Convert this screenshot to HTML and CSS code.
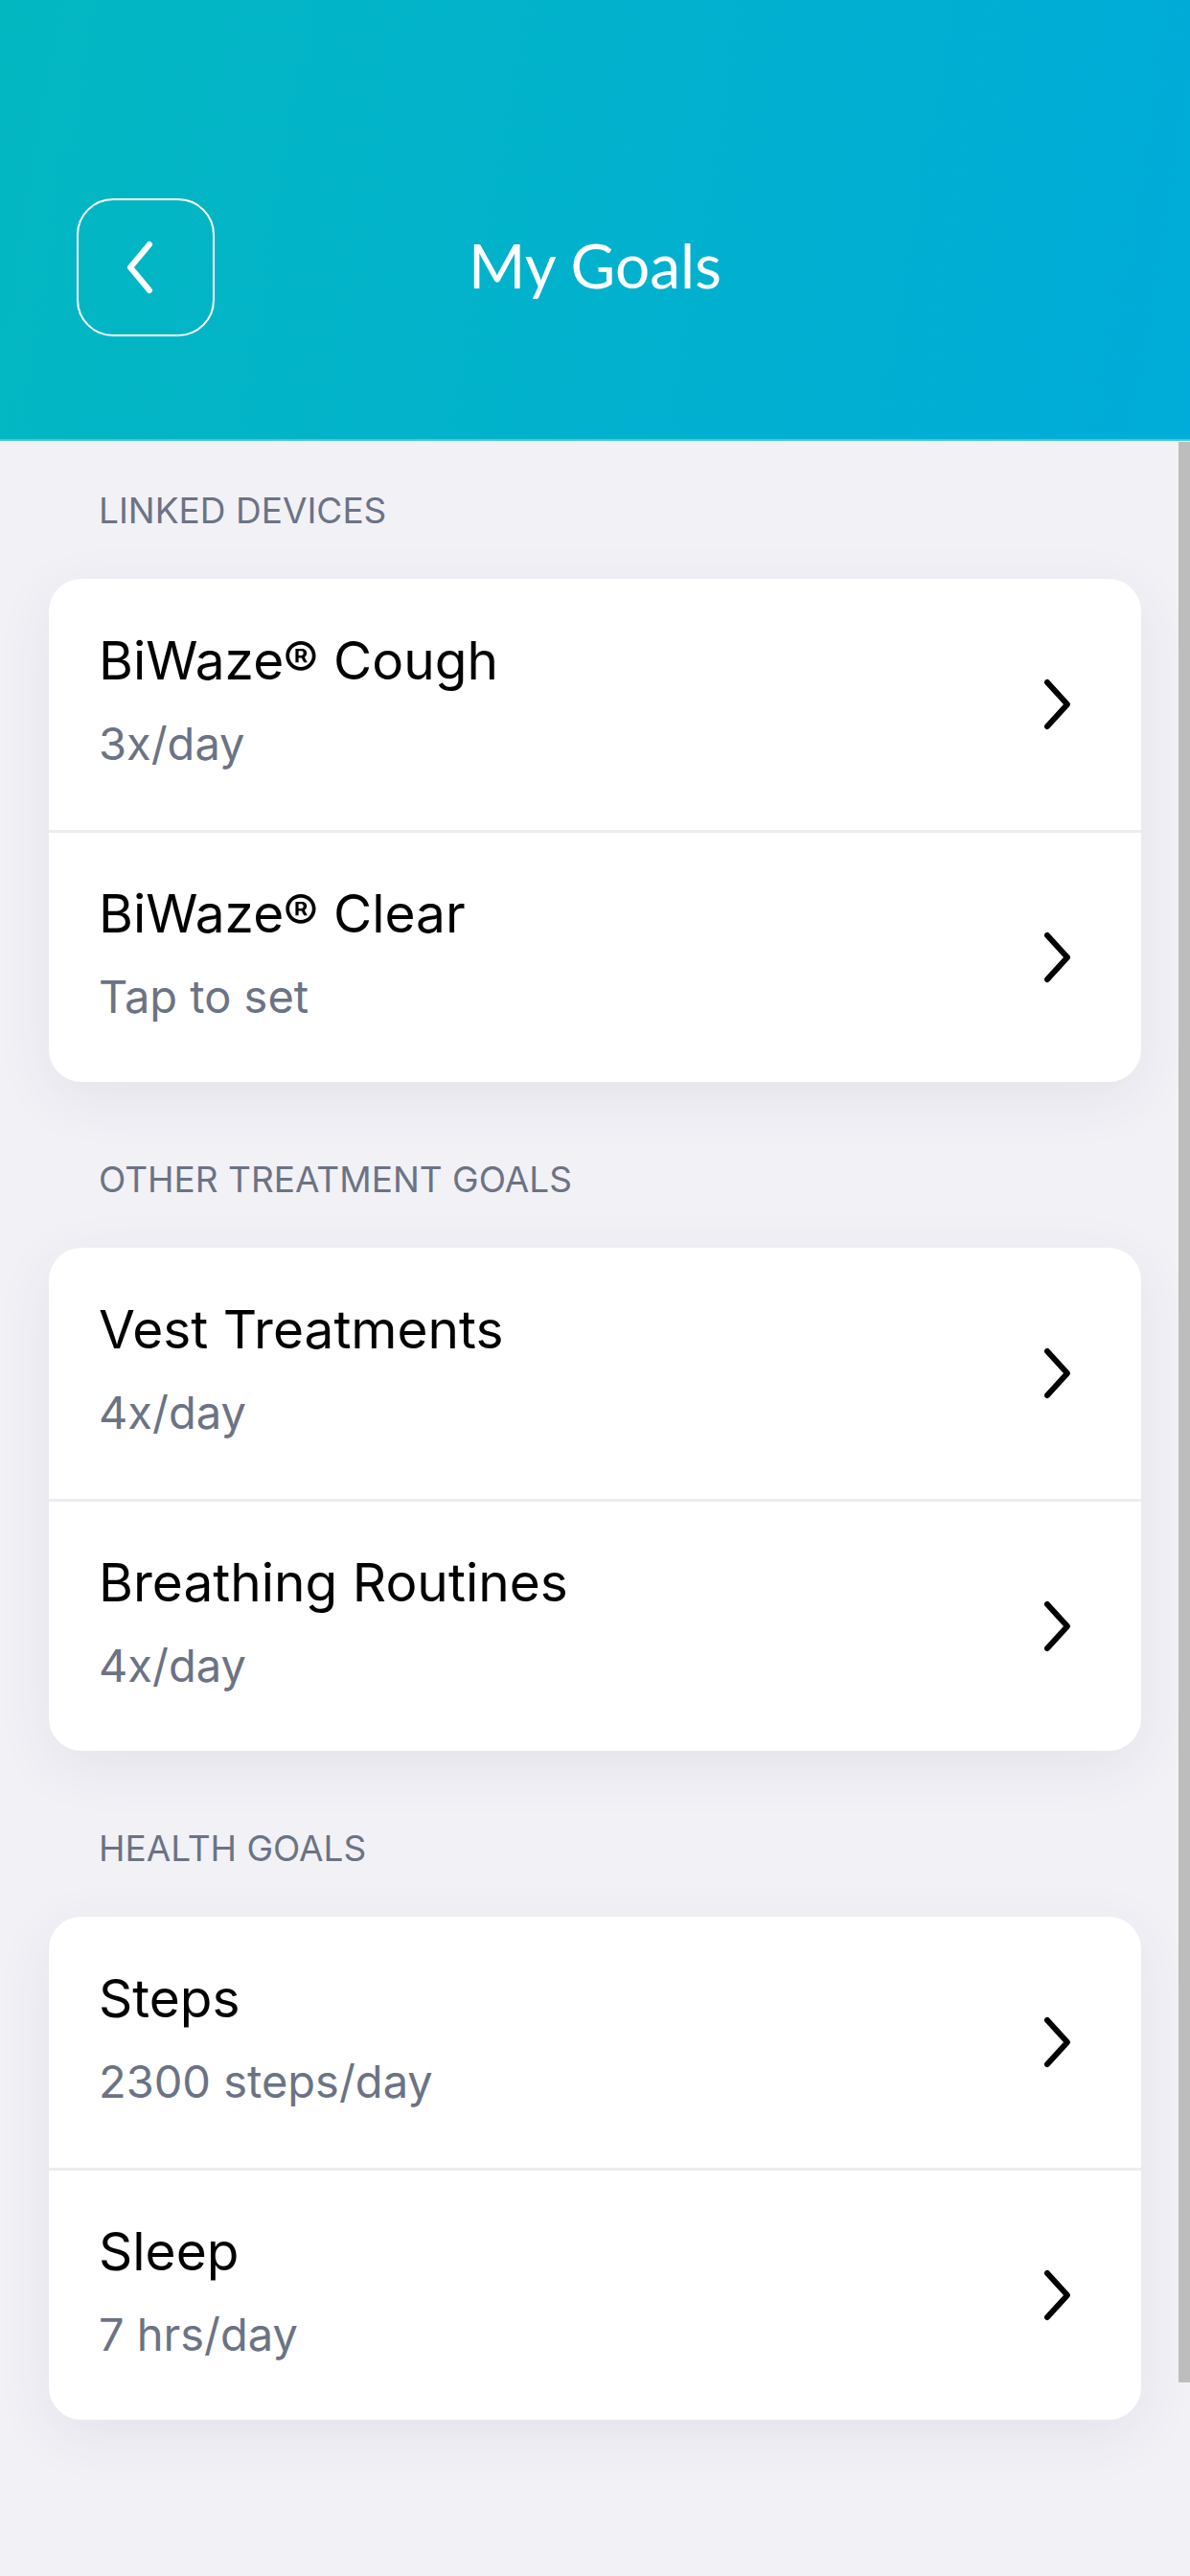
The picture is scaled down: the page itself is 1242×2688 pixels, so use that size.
FILE: index.html
```html
<!DOCTYPE html>
<html lang="en">
<head>
  <meta charset="UTF-8">
  <meta name="viewport" content="width=device-width, initial-scale=1.0">
  <title>My Goals</title>
  <link rel="stylesheet" href="styles.css">
</head>
<body>
  <header class="topbar">
    <button class="back-btn" type="button" aria-label="Back">
      <svg width="40" height="60" viewBox="0 0 40 60">
        <polyline points="27,6 7,30 27,54" fill="none" stroke="#fff" stroke-width="6" stroke-linecap="round" stroke-linejoin="round"/>
      </svg>
    </button>
    <h1 class="title">My Goals</h1>
    <span class="spacer"></span>
  </header>

  <main class="content">
    <!-- Linked devices -->
    <h2 class="section-label">LINKED DEVICES</h2>
    <section class="card">
      <a class="row" href="#">
        <div class="row-text">
          <span class="row-title">BiWaze® Cough</span>
          <span class="row-sub">3x/day</span>
        </div>
        <svg class="chev" width="36" height="56" viewBox="0 0 36 56"><polyline points="8,5 29,28 8,51" fill="none" stroke="#000" stroke-width="6" stroke-linecap="round" stroke-linejoin="round"/></svg>
      </a>
      <a class="row" href="#">
        <div class="row-text">
          <span class="row-title">BiWaze® Clear</span>
          <span class="row-sub">Tap to set</span>
        </div>
        <svg class="chev" width="36" height="56" viewBox="0 0 36 56"><polyline points="8,5 29,28 8,51" fill="none" stroke="#000" stroke-width="6" stroke-linecap="round" stroke-linejoin="round"/></svg>
      </a>
    </section>

    <!-- Other treatment goals -->
    <h2 class="section-label">OTHER TREATMENT GOALS</h2>
    <section class="card">
      <a class="row" href="#">
        <div class="row-text">
          <span class="row-title">Vest Treatments</span>
          <span class="row-sub">4x/day</span>
        </div>
        <svg class="chev" width="36" height="56" viewBox="0 0 36 56"><polyline points="8,5 29,28 8,51" fill="none" stroke="#000" stroke-width="6" stroke-linecap="round" stroke-linejoin="round"/></svg>
      </a>
      <a class="row" href="#">
        <div class="row-text">
          <span class="row-title">Breathing Routines</span>
          <span class="row-sub">4x/day</span>
        </div>
        <svg class="chev" width="36" height="56" viewBox="0 0 36 56"><polyline points="8,5 29,28 8,51" fill="none" stroke="#000" stroke-width="6" stroke-linecap="round" stroke-linejoin="round"/></svg>
      </a>
    </section>

    <!-- Health goals -->
    <h2 class="section-label">HEALTH GOALS</h2>
    <section class="card">
      <a class="row" href="#">
        <div class="row-text">
          <span class="row-title">Steps</span>
          <span class="row-sub">2300 steps/day</span>
        </div>
        <svg class="chev" width="36" height="56" viewBox="0 0 36 56"><polyline points="8,5 29,28 8,51" fill="none" stroke="#000" stroke-width="6" stroke-linecap="round" stroke-linejoin="round"/></svg>
      </a>
      <a class="row" href="#">
        <div class="row-text">
          <span class="row-title">Sleep</span>
          <span class="row-sub">7 hrs/day</span>
        </div>
        <svg class="chev" width="36" height="56" viewBox="0 0 36 56"><polyline points="8,5 29,28 8,51" fill="none" stroke="#000" stroke-width="6" stroke-linecap="round" stroke-linejoin="round"/></svg>
      </a>
    </section>
  </main>

  <div class="scroll-thumb"></div>
</body>
</html>
```

FILE: styles.css
```css
body {
  margin: 0;
  font-family: Inter, "Open Sans", sans-serif;
  background: #f2f1f6;
  color: #000;
  position: relative;
  min-height: 2688px;
}

.topbar {
  box-sizing: border-box;
  height: 460px;
  padding: 207px 80px 0;
  background: linear-gradient(100deg, #03b7c1 0%, #00acd9 100%);
  border-bottom: 2px solid #3cc6df;
  display: grid;
  grid-template-columns: 144px 1fr 144px;
  align-items: start;
}

.back-btn {
  box-sizing: border-box;
  width: 144px;
  height: 144px;
  border: 2px solid #fff;
  border-radius: 38px;
  background: transparent;
  display: flex;
  align-items: center;
  justify-content: center;
  padding: 0 6px 0 0;
  cursor: pointer;
}

.title {
  margin: 0;
  height: 144px;
  line-height: 140px;
  text-align: center;
  color: #fff;
  font-family: Lato, Inter, sans-serif;
  font-size: 64px;
  font-weight: 400;
}

.content {
  padding: 48px 51px 0;
}

.section-label {
  margin: 0 0 49px 52px;
  padding-top: 3px;
  font-size: 37px;
  line-height: 44px;
  font-weight: 400;
  color: #6b7385;
}

.card {
  background: #fff;
  border-radius: 34px;
  margin-bottom: 77px;
  box-shadow: 0 16px 60px rgba(70, 70, 100, 0.08);
  overflow: hidden;
}

.row {
  box-sizing: border-box;
  height: 262px;
  padding: 0 70px 0 52px;
  display: flex;
  align-items: center;
  justify-content: space-between;
  text-decoration: none;
  color: inherit;
}

.row + .row {
  height: 263px;
  border-top: 3px solid #ececf1;
}

.row-text {
  display: flex;
  flex-direction: column;
  gap: 26px;
  padding-bottom: 10px;
}

.row-title {
  font-size: 55px;
  line-height: 66px;
  color: #000;
}

.row-sub {
  font-size: 47px;
  line-height: 56px;
  color: #6b7385;
}

.scroll-thumb {
  position: absolute;
  top: 461px;
  right: 0;
  width: 12px;
  height: 2025px;
  background: #bdbdbd;
}
```
